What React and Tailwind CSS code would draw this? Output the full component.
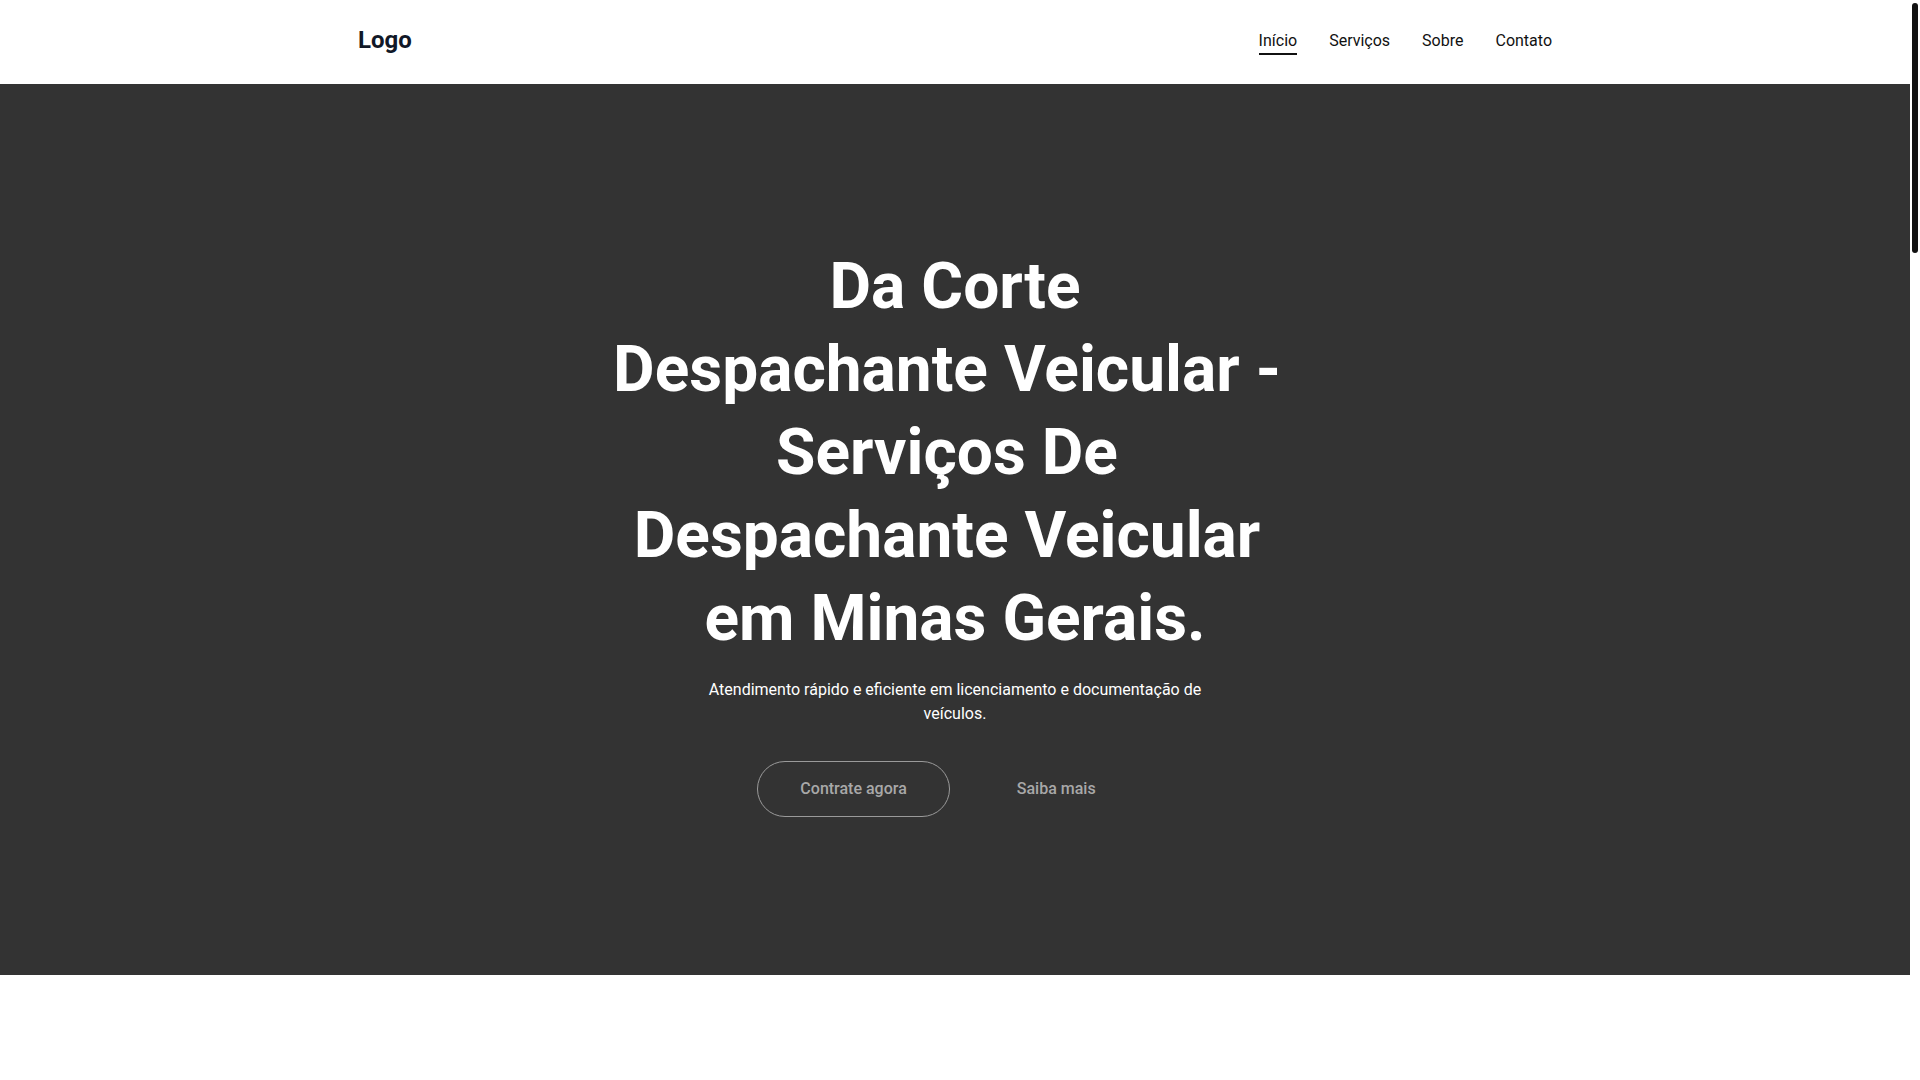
import React from 'react';

const navLinks = [
  { label: 'Início', href: '#inicio', active: true },
  { label: 'Serviços', href: '#servicos' },
  { label: 'Sobre', href: '#sobre' },
  { label: 'Contato', href: '#contato' },
];

const titleWords = 'Despachante Veicular - Serviços De Despachante Veicular em Minas Gerais.'.split(' ');

function Header() {
  return (
    <header className="bg-white">
      <div className="max-w-[1194px] mx-auto h-[84px] flex items-center justify-between">
        <a href="#inicio" className="-mt-[5px] text-2xl font-bold text-[#111827]">
          Logo
        </a>
        <nav className="flex items-center gap-8">
          {navLinks.map((link) => (
            <a
              key={link.label}
              href={link.href}
              className={
                link.active
                  ? 'text-base leading-6 text-[#111] border-b-2 border-[#111]'
                  : 'text-base leading-6 text-[#111] border-b-2 border-transparent'
              }
            >
              {link.label}
            </a>
          ))}
        </nav>
      </div>
    </header>
  );
}

function Hero() {
  return (
    <section id="inicio" className="bg-[#333333] h-[891px] flex items-center justify-center px-6">
      <div className="mt-[3px] flex flex-col items-center text-center">
        <h1 className="max-w-[720px] text-[64px] leading-[1.3] font-bold text-white">
          <span className="block">Da Corte</span>
          <span className="flex flex-wrap justify-center">
            {titleWords.map((word, i) => (
              <span
                key={i}
                className={i === titleWords.length - 1 ? 'inline-block' : 'inline-block mr-[0.25em]'}
              >
                {word}
              </span>
            ))}
          </span>
        </h1>
        <p className="mt-[18px] max-w-[500px] text-base leading-6 text-white">
          Atendimento rápido e eficiente em licenciamento e documentação de veículos.
        </p>
        <div className="mt-[35px] flex items-center gap-6">
          <a
            href="#contato"
            className="rounded-full border border-[#9a9a9a] px-[42px] py-[15px] text-base leading-6 font-medium text-[#a8a8a8]"
          >
            Contrate agora
          </a>
          <a
            href="#servicos"
            className="rounded-full border border-transparent pl-[42px] pr-[56px] py-[15px] text-base leading-6 font-medium text-[#a8a8a8]"
          >
            Saiba mais
          </a>
        </div>
      </div>
    </section>
  );
}

export default function App() {
  return (
    <div
      className="min-h-screen bg-white pr-[10px]"
      style={{ fontFamily: 'Roboto, "Liberation Sans", sans-serif' }}
    >
      <Header />
      <Hero />
      {/* scrollbar thumb of the page */}
      <div aria-hidden="true" className="fixed top-[3px] right-[2px] w-[6px] h-[250px] rounded-full bg-[#111111]" />
    </div>
  );
}
